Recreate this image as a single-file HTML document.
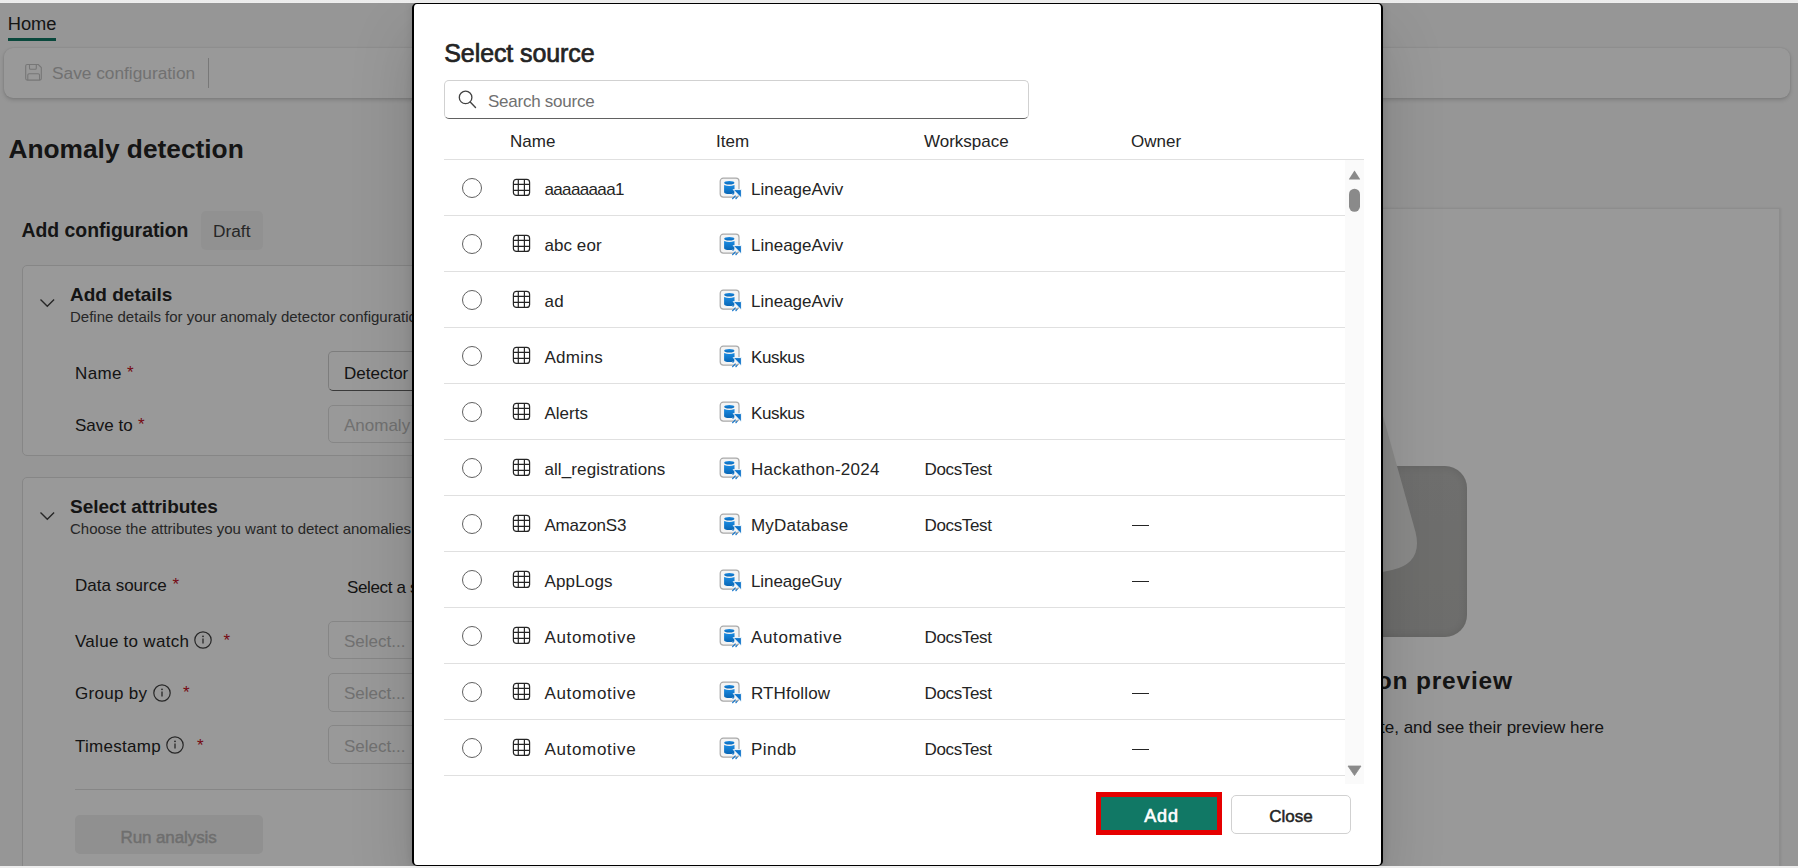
<!DOCTYPE html>
<html><head><meta charset="utf-8"><style>
html,body{margin:0;padding:0}
body{width:1798px;height:868px;overflow:hidden;position:relative;background:#ededed;font-family:"Liberation Sans", sans-serif}
.t{position:absolute;white-space:nowrap}
#page{position:absolute;left:0;top:3px;width:1798px;height:863px;background:#fafafa;overflow:hidden}
#page > *{margin-top:-3px}
#ov{position:absolute;left:0;top:3px;width:1798px;height:863px;background:rgba(0,0,0,.4)}
#dlg{position:absolute;left:412px;top:3px;width:971px;height:863px;background:#fff;border-style:solid;border-color:#000;border-width:1px 2px 1px 2px;box-sizing:border-box;border-radius:5px;box-shadow:0 0 8px rgba(0,0,0,.12),0 32px 64px rgba(0,0,0,.16)}
</style></head><body>
<div id="page">
<div class="t" style="left:7.7px;top:15.01px;font-size:18.3px;line-height:18.3px;font-weight:normal;color:#242424;">Home</div>
<div style="position:absolute;left:8px;top:38px;width:48px;height:3px;background:#117865"></div>
<div style="position:absolute;left:4px;top:47.5px;width:1786px;height:50px;background:#fff;border-radius:9px;box-shadow:0 2px 4px rgba(0,0,0,.16),0 0 2px rgba(0,0,0,.12)"></div>
<svg style="position:absolute;left:24px;top:63px" width="20" height="20" viewBox="0 0 20 20"><path d="M3.2 1.5 H14.3 L17.3 4.5 V15.6 Q17.3 17.1 15.8 17.1 H3.2 Q1.7 17.1 1.7 15.6 V3 Q1.7 1.5 3.2 1.5 Z M5.5 1.5 V5.3 Q5.5 6.3 6.5 6.3 H11.3 Q12.3 6.3 12.3 5.3 V1.5 M3.8 17.1 V12 Q3.8 10.7 5.1 10.7 H14.2 Q15.5 10.7 15.5 12 V17.1" fill="none" stroke="#c6c6c6" stroke-width="1.1"/></svg>
<div class="t" style="left:52px;top:65.36px;font-size:17.3px;line-height:17.3px;font-weight:normal;color:#bdbdbd;">Save configuration</div>
<div style="position:absolute;left:208px;top:58px;width:1px;height:30px;background:#c8c8c8"></div>
<div class="t" style="left:8.5px;top:135.94px;font-size:26.3px;line-height:26.3px;font-weight:bold;color:#242424;">Anomaly detection</div>
<div class="t" style="left:21.5px;top:221.18px;font-size:19.4px;line-height:19.4px;font-weight:bold;color:#242424;">Add configuration</div>
<div style="position:absolute;left:200.5px;top:211px;width:62.5px;height:39px;background:#f2f2f2;border-radius:5px"></div>
<div class="t" style="left:213px;top:223.16px;font-size:17.3px;line-height:17.3px;font-weight:normal;color:#424242;">Draft</div>
<div style="position:absolute;left:22px;top:265px;width:800px;height:191px;background:#fff;border:1px solid #e0e0e0;border-radius:5px;box-sizing:border-box"></div>
<svg style="position:absolute;left:39px;top:297px" width="18" height="12" viewBox="0 0 18 12"><path d="M1.5 2.5l6.8 6.8 6.8-6.8" fill="none" stroke="#424242" stroke-width="1.4"/></svg>
<div class="t" style="left:70px;top:284.52px;font-size:19px;line-height:19px;font-weight:bold;color:#242424;">Add details</div>
<div class="t" style="left:70px;top:309.30px;font-size:15px;line-height:15px;font-weight:normal;color:#424242;">Define details for your anomaly detector configuration</div>
<div class="t" style="left:75px;top:364.61px;font-size:17px;line-height:17px;font-weight:normal;color:#242424;letter-spacing:0.4px;">Name</div>
<div class="t" style="left:127px;top:363.61px;font-size:17px;line-height:17px;font-weight:normal;color:#c50f1f;">*</div>
<div class="t" style="left:75px;top:416.61px;font-size:17px;line-height:17px;font-weight:normal;color:#242424;">Save to</div>
<div class="t" style="left:138px;top:415.61px;font-size:17px;line-height:17px;font-weight:normal;color:#c50f1f;">*</div>
<div style="position:absolute;left:328px;top:351px;width:300px;height:39.5px;background:#fff;border:1px solid #d1d1d1;border-bottom-color:#616161;border-radius:5px;box-sizing:border-box"></div>
<div class="t" style="left:344px;top:364.61px;font-size:17px;line-height:17px;font-weight:normal;color:#242424;">Detector</div>
<div style="position:absolute;left:328px;top:405px;width:300px;height:37.5px;background:#fff;border:1px solid #e0e0e0;border-radius:5px;box-sizing:border-box"></div>
<div class="t" style="left:344px;top:416.61px;font-size:17px;line-height:17px;font-weight:normal;color:#bdbdbd;">Anomaly</div>
<div style="position:absolute;left:22px;top:477px;width:800px;height:420px;background:#fff;border:1px solid #e0e0e0;border-radius:5px;box-sizing:border-box"></div>
<svg style="position:absolute;left:39px;top:509.5px" width="18" height="12" viewBox="0 0 18 12"><path d="M1.5 2.5l6.8 6.8 6.8-6.8" fill="none" stroke="#424242" stroke-width="1.4"/></svg>
<div class="t" style="left:70px;top:496.52px;font-size:19px;line-height:19px;font-weight:bold;color:#242424;">Select attributes</div>
<div class="t" style="left:70px;top:521.30px;font-size:15px;line-height:15px;font-weight:normal;color:#424242;">Choose the attributes you want to detect anomalies for</div>
<div class="t" style="left:75px;top:576.61px;font-size:17px;line-height:17px;font-weight:normal;color:#242424;">Data source</div>
<div class="t" style="left:172.5px;top:575.61px;font-size:17px;line-height:17px;font-weight:normal;color:#c50f1f;">*</div>
<div class="t" style="left:347px;top:578.61px;font-size:17px;line-height:17px;font-weight:normal;color:#242424;letter-spacing:-0.35px;">Select a source</div>
<div class="t" style="left:75px;top:632.61px;font-size:17px;line-height:17px;font-weight:normal;color:#242424;letter-spacing:0.28px;">Value to watch</div>
<svg style="position:absolute;left:193px;top:630px" width="20" height="20" viewBox="0 0 20 20"><circle cx="10" cy="10" r="8.2" fill="none" stroke="#424242" stroke-width="1.2"/><path d="M10 8.6v5" stroke="#424242" stroke-width="1.3"/><circle cx="10" cy="6.3" r="0.9" fill="#424242"/></svg>
<div class="t" style="left:223.5px;top:631.61px;font-size:17px;line-height:17px;font-weight:normal;color:#c50f1f;">*</div>
<div style="position:absolute;left:328px;top:621px;width:300px;height:37.5px;background:#fff;border:1px solid #e0e0e0;border-radius:5px;box-sizing:border-box"></div>
<div class="t" style="left:344px;top:632.61px;font-size:17px;line-height:17px;font-weight:normal;color:#bdbdbd;">Select...</div>
<div class="t" style="left:75px;top:685.11px;font-size:17px;line-height:17px;font-weight:normal;color:#242424;letter-spacing:0.28px;">Group by</div>
<svg style="position:absolute;left:152px;top:682.5px" width="20" height="20" viewBox="0 0 20 20"><circle cx="10" cy="10" r="8.2" fill="none" stroke="#424242" stroke-width="1.2"/><path d="M10 8.6v5" stroke="#424242" stroke-width="1.3"/><circle cx="10" cy="6.3" r="0.9" fill="#424242"/></svg>
<div class="t" style="left:183px;top:684.11px;font-size:17px;line-height:17px;font-weight:normal;color:#c50f1f;">*</div>
<div style="position:absolute;left:328px;top:672.5px;width:300px;height:39.0px;background:#fff;border:1px solid #e0e0e0;border-radius:5px;box-sizing:border-box"></div>
<div class="t" style="left:344px;top:685.11px;font-size:17px;line-height:17px;font-weight:normal;color:#bdbdbd;">Select...</div>
<div class="t" style="left:75px;top:737.61px;font-size:17px;line-height:17px;font-weight:normal;color:#242424;letter-spacing:0.28px;">Timestamp</div>
<svg style="position:absolute;left:165px;top:735px" width="20" height="20" viewBox="0 0 20 20"><circle cx="10" cy="10" r="8.2" fill="none" stroke="#424242" stroke-width="1.2"/><path d="M10 8.6v5" stroke="#424242" stroke-width="1.3"/><circle cx="10" cy="6.3" r="0.9" fill="#424242"/></svg>
<div class="t" style="left:197px;top:736.61px;font-size:17px;line-height:17px;font-weight:normal;color:#c50f1f;">*</div>
<div style="position:absolute;left:328px;top:725px;width:300px;height:38.5px;background:#fff;border:1px solid #e0e0e0;border-radius:5px;box-sizing:border-box"></div>
<div class="t" style="left:344px;top:737.61px;font-size:17px;line-height:17px;font-weight:normal;color:#bdbdbd;">Select...</div>
<div style="position:absolute;left:75px;top:789px;width:700px;height:1px;background:#e0e0e0"></div>
<div style="position:absolute;left:75px;top:815px;width:187.5px;height:38.5px;background:#f0f0f0;border-radius:5px"></div>
<div class="t" style="left:120.5px;top:828.61px;font-size:17px;line-height:17px;font-weight:normal;color:#b8b8b8;letter-spacing:-0.1px;-webkit-text-stroke:0.45px #b8b8b8;">Run analysis</div>
<div style="position:absolute;left:1300px;top:208px;width:479.5px;height:700px;background:#fff;border:1px solid #ebebeb;box-sizing:border-box;box-shadow:1px 0 2px rgba(0,0,0,.08)"></div>
<div style="position:absolute;left:1300px;top:466px;width:166.5px;height:170.5px;border-radius:22px;background:linear-gradient(#b9b9b7,#b6b6b4);box-shadow:inset 0 0 8px rgba(0,0,0,.12)"></div>
<svg style="position:absolute;left:1300px;top:300px" width="130" height="300" viewBox="0 0 130 300"><path d="M50.5 0 L115.5 232 Q123 263 92 270 L0 289 Z" fill="#e7e7e5"/></svg>
<div class="t" style="left:1100.8px;top:668.86px;font-size:24.5px;line-height:24.5px;font-weight:bold;color:#242424;letter-spacing:0.8px;width:412px;text-align:right;">Configuration preview</div>
<div class="t" style="left:1000px;top:718.81px;font-size:17px;line-height:17px;font-weight:normal;color:#242424;width:604px;text-align:right;">Select attributes to evaluate, and see their preview here</div>
</div>
<div id="ov"></div>
<div id="dlg">
</div>
<div class="t" style="left:444.3px;top:40.84px;font-size:25px;line-height:25px;font-weight:normal;color:#242424;letter-spacing:-0.1px;-webkit-text-stroke:0.7px #242424;">Select source</div>
<div style="position:absolute;left:444px;top:79.5px;width:585px;height:39.5px;border:1px solid #d1d1d1;border-bottom-color:#616161;border-radius:5px;box-sizing:border-box;background:#fff"></div>
<svg style="position:absolute;left:456px;top:88px" width="24" height="24" viewBox="0 0 24 24"><circle cx="9.6" cy="9.4" r="6.3" fill="none" stroke="#424242" stroke-width="1.3"/><path d="M14.2 14.1l5.3 5.3" stroke="#424242" stroke-width="1.4" stroke-linecap="round"/></svg>
<div class="t" style="left:488px;top:92.61px;font-size:17px;line-height:17px;font-weight:normal;color:#707070;letter-spacing:-0.25px;">Search source</div>
<div class="t" style="left:510px;top:133.01px;font-size:17px;line-height:17px;font-weight:normal;color:#242424;">Name</div>
<div class="t" style="left:716px;top:133.01px;font-size:17px;line-height:17px;font-weight:normal;color:#242424;">Item</div>
<div class="t" style="left:924px;top:133.01px;font-size:17px;line-height:17px;font-weight:normal;color:#242424;">Workspace</div>
<div class="t" style="left:1131px;top:133.01px;font-size:17px;line-height:17px;font-weight:normal;color:#242424;">Owner</div>
<div style="position:absolute;left:444px;top:159px;width:920px;height:1px;background:#e0e0e0"></div>
<div style="position:absolute;left:444px;top:215px;width:901px;height:1px;background:#e0e0e0"></div>
<div style="position:absolute;left:462px;top:178px;width:20px;height:20px;border:1px solid #616161;border-radius:50%;box-sizing:border-box"></div>
<svg style="position:absolute;left:512px;top:178px" width="20" height="20" viewBox="0 0 20 20"><rect x="1.4" y="1.4" width="16.2" height="16" rx="3" fill="none" stroke="#242424" stroke-width="1.2"/><path d="M6.3 1.4v16M12.4 1.4v16M1.4 6.3h16.2M1.4 12.4h16.2" stroke="#242424" stroke-width="1.2"/></svg>
<div class="t" style="left:544.4px;top:181.11px;font-size:17px;line-height:17px;font-weight:normal;color:#242424;letter-spacing:-0.625px;">aaaaaaaa1</div>
<svg style="position:absolute;left:718px;top:177px" width="26" height="24" viewBox="0 0 26 24"><defs><linearGradient id="g0" x1="0" y1="0" x2="0" y2="1"><stop offset="0" stop-color="#1a8be2"/><stop offset="1" stop-color="#0866b5"/></linearGradient></defs><rect x="2.2" y="1.2" width="18.8" height="18.9" rx="3" fill="#f4f4f4" stroke="#a9a9a9" stroke-width="1.2"/><ellipse cx="11.3" cy="5.8" rx="5.1" ry="1.8" fill="url(#g0)"/><path d="M6.1 8.1 Q11.3 9.9 16.5 8.1 V15 Q16.5 17 11.3 17 Q6.1 17 6.1 15 Z" fill="url(#g0)"/><path d="M15.2 12.6 H23.4 V21 Z" fill="#0f74ca" stroke="#fff" stroke-width="0.9" stroke-linejoin="round"/><path d="M14.6 17.6 l1.5-1.5 M14.3 22 l3.3-3.3 M17.6 22 l1.8-1.8" stroke="#1577cc" stroke-width="1.1"/></svg>
<div class="t" style="left:751px;top:181.11px;font-size:17px;line-height:17px;font-weight:normal;color:#242424;">LineageAviv</div>
<div style="position:absolute;left:444px;top:271px;width:901px;height:1px;background:#e0e0e0"></div>
<div style="position:absolute;left:462px;top:234px;width:20px;height:20px;border:1px solid #616161;border-radius:50%;box-sizing:border-box"></div>
<svg style="position:absolute;left:512px;top:234px" width="20" height="20" viewBox="0 0 20 20"><rect x="1.4" y="1.4" width="16.2" height="16" rx="3" fill="none" stroke="#242424" stroke-width="1.2"/><path d="M6.3 1.4v16M12.4 1.4v16M1.4 6.3h16.2M1.4 12.4h16.2" stroke="#242424" stroke-width="1.2"/></svg>
<div class="t" style="left:544.4px;top:237.11px;font-size:17px;line-height:17px;font-weight:normal;color:#242424;letter-spacing:0.083px;">abc eor</div>
<svg style="position:absolute;left:718px;top:233px" width="26" height="24" viewBox="0 0 26 24"><defs><linearGradient id="g1" x1="0" y1="0" x2="0" y2="1"><stop offset="0" stop-color="#1a8be2"/><stop offset="1" stop-color="#0866b5"/></linearGradient></defs><rect x="2.2" y="1.2" width="18.8" height="18.9" rx="3" fill="#f4f4f4" stroke="#a9a9a9" stroke-width="1.2"/><ellipse cx="11.3" cy="5.8" rx="5.1" ry="1.8" fill="url(#g1)"/><path d="M6.1 8.1 Q11.3 9.9 16.5 8.1 V15 Q16.5 17 11.3 17 Q6.1 17 6.1 15 Z" fill="url(#g1)"/><path d="M15.2 12.6 H23.4 V21 Z" fill="#0f74ca" stroke="#fff" stroke-width="0.9" stroke-linejoin="round"/><path d="M14.6 17.6 l1.5-1.5 M14.3 22 l3.3-3.3 M17.6 22 l1.8-1.8" stroke="#1577cc" stroke-width="1.1"/></svg>
<div class="t" style="left:751px;top:237.11px;font-size:17px;line-height:17px;font-weight:normal;color:#242424;">LineageAviv</div>
<div style="position:absolute;left:444px;top:327px;width:901px;height:1px;background:#e0e0e0"></div>
<div style="position:absolute;left:462px;top:290px;width:20px;height:20px;border:1px solid #616161;border-radius:50%;box-sizing:border-box"></div>
<svg style="position:absolute;left:512px;top:290px" width="20" height="20" viewBox="0 0 20 20"><rect x="1.4" y="1.4" width="16.2" height="16" rx="3" fill="none" stroke="#242424" stroke-width="1.2"/><path d="M6.3 1.4v16M12.4 1.4v16M1.4 6.3h16.2M1.4 12.4h16.2" stroke="#242424" stroke-width="1.2"/></svg>
<div class="t" style="left:544.4px;top:293.11px;font-size:17px;line-height:17px;font-weight:normal;color:#242424;letter-spacing:0.4px;">ad</div>
<svg style="position:absolute;left:718px;top:289px" width="26" height="24" viewBox="0 0 26 24"><defs><linearGradient id="g2" x1="0" y1="0" x2="0" y2="1"><stop offset="0" stop-color="#1a8be2"/><stop offset="1" stop-color="#0866b5"/></linearGradient></defs><rect x="2.2" y="1.2" width="18.8" height="18.9" rx="3" fill="#f4f4f4" stroke="#a9a9a9" stroke-width="1.2"/><ellipse cx="11.3" cy="5.8" rx="5.1" ry="1.8" fill="url(#g2)"/><path d="M6.1 8.1 Q11.3 9.9 16.5 8.1 V15 Q16.5 17 11.3 17 Q6.1 17 6.1 15 Z" fill="url(#g2)"/><path d="M15.2 12.6 H23.4 V21 Z" fill="#0f74ca" stroke="#fff" stroke-width="0.9" stroke-linejoin="round"/><path d="M14.6 17.6 l1.5-1.5 M14.3 22 l3.3-3.3 M17.6 22 l1.8-1.8" stroke="#1577cc" stroke-width="1.1"/></svg>
<div class="t" style="left:751px;top:293.11px;font-size:17px;line-height:17px;font-weight:normal;color:#242424;">LineageAviv</div>
<div style="position:absolute;left:444px;top:383px;width:901px;height:1px;background:#e0e0e0"></div>
<div style="position:absolute;left:462px;top:346px;width:20px;height:20px;border:1px solid #616161;border-radius:50%;box-sizing:border-box"></div>
<svg style="position:absolute;left:512px;top:346px" width="20" height="20" viewBox="0 0 20 20"><rect x="1.4" y="1.4" width="16.2" height="16" rx="3" fill="none" stroke="#242424" stroke-width="1.2"/><path d="M6.3 1.4v16M12.4 1.4v16M1.4 6.3h16.2M1.4 12.4h16.2" stroke="#242424" stroke-width="1.2"/></svg>
<div class="t" style="left:544.4px;top:349.11px;font-size:17px;line-height:17px;font-weight:normal;color:#242424;letter-spacing:0.32px;">Admins</div>
<svg style="position:absolute;left:718px;top:345px" width="26" height="24" viewBox="0 0 26 24"><defs><linearGradient id="g3" x1="0" y1="0" x2="0" y2="1"><stop offset="0" stop-color="#1a8be2"/><stop offset="1" stop-color="#0866b5"/></linearGradient></defs><rect x="2.2" y="1.2" width="18.8" height="18.9" rx="3" fill="#f4f4f4" stroke="#a9a9a9" stroke-width="1.2"/><ellipse cx="11.3" cy="5.8" rx="5.1" ry="1.8" fill="url(#g3)"/><path d="M6.1 8.1 Q11.3 9.9 16.5 8.1 V15 Q16.5 17 11.3 17 Q6.1 17 6.1 15 Z" fill="url(#g3)"/><path d="M15.2 12.6 H23.4 V21 Z" fill="#0f74ca" stroke="#fff" stroke-width="0.9" stroke-linejoin="round"/><path d="M14.6 17.6 l1.5-1.5 M14.3 22 l3.3-3.3 M17.6 22 l1.8-1.8" stroke="#1577cc" stroke-width="1.1"/></svg>
<div class="t" style="left:751px;top:349.11px;font-size:17px;line-height:17px;font-weight:normal;color:#242424;letter-spacing:-0.38px;">Kuskus</div>
<div style="position:absolute;left:444px;top:439px;width:901px;height:1px;background:#e0e0e0"></div>
<div style="position:absolute;left:462px;top:402px;width:20px;height:20px;border:1px solid #616161;border-radius:50%;box-sizing:border-box"></div>
<svg style="position:absolute;left:512px;top:402px" width="20" height="20" viewBox="0 0 20 20"><rect x="1.4" y="1.4" width="16.2" height="16" rx="3" fill="none" stroke="#242424" stroke-width="1.2"/><path d="M6.3 1.4v16M12.4 1.4v16M1.4 6.3h16.2M1.4 12.4h16.2" stroke="#242424" stroke-width="1.2"/></svg>
<div class="t" style="left:544.4px;top:405.11px;font-size:17px;line-height:17px;font-weight:normal;color:#242424;letter-spacing:0.02px;">Alerts</div>
<svg style="position:absolute;left:718px;top:401px" width="26" height="24" viewBox="0 0 26 24"><defs><linearGradient id="g4" x1="0" y1="0" x2="0" y2="1"><stop offset="0" stop-color="#1a8be2"/><stop offset="1" stop-color="#0866b5"/></linearGradient></defs><rect x="2.2" y="1.2" width="18.8" height="18.9" rx="3" fill="#f4f4f4" stroke="#a9a9a9" stroke-width="1.2"/><ellipse cx="11.3" cy="5.8" rx="5.1" ry="1.8" fill="url(#g4)"/><path d="M6.1 8.1 Q11.3 9.9 16.5 8.1 V15 Q16.5 17 11.3 17 Q6.1 17 6.1 15 Z" fill="url(#g4)"/><path d="M15.2 12.6 H23.4 V21 Z" fill="#0f74ca" stroke="#fff" stroke-width="0.9" stroke-linejoin="round"/><path d="M14.6 17.6 l1.5-1.5 M14.3 22 l3.3-3.3 M17.6 22 l1.8-1.8" stroke="#1577cc" stroke-width="1.1"/></svg>
<div class="t" style="left:751px;top:405.11px;font-size:17px;line-height:17px;font-weight:normal;color:#242424;letter-spacing:-0.38px;">Kuskus</div>
<div style="position:absolute;left:444px;top:495px;width:901px;height:1px;background:#e0e0e0"></div>
<div style="position:absolute;left:462px;top:458px;width:20px;height:20px;border:1px solid #616161;border-radius:50%;box-sizing:border-box"></div>
<svg style="position:absolute;left:512px;top:458px" width="20" height="20" viewBox="0 0 20 20"><rect x="1.4" y="1.4" width="16.2" height="16" rx="3" fill="none" stroke="#242424" stroke-width="1.2"/><path d="M6.3 1.4v16M12.4 1.4v16M1.4 6.3h16.2M1.4 12.4h16.2" stroke="#242424" stroke-width="1.2"/></svg>
<div class="t" style="left:544.4px;top:461.11px;font-size:17px;line-height:17px;font-weight:normal;color:#242424;letter-spacing:0.119px;">all_registrations</div>
<svg style="position:absolute;left:718px;top:457px" width="26" height="24" viewBox="0 0 26 24"><defs><linearGradient id="g5" x1="0" y1="0" x2="0" y2="1"><stop offset="0" stop-color="#1a8be2"/><stop offset="1" stop-color="#0866b5"/></linearGradient></defs><rect x="2.2" y="1.2" width="18.8" height="18.9" rx="3" fill="#f4f4f4" stroke="#a9a9a9" stroke-width="1.2"/><ellipse cx="11.3" cy="5.8" rx="5.1" ry="1.8" fill="url(#g5)"/><path d="M6.1 8.1 Q11.3 9.9 16.5 8.1 V15 Q16.5 17 11.3 17 Q6.1 17 6.1 15 Z" fill="url(#g5)"/><path d="M15.2 12.6 H23.4 V21 Z" fill="#0f74ca" stroke="#fff" stroke-width="0.9" stroke-linejoin="round"/><path d="M14.6 17.6 l1.5-1.5 M14.3 22 l3.3-3.3 M17.6 22 l1.8-1.8" stroke="#1577cc" stroke-width="1.1"/></svg>
<div class="t" style="left:751px;top:461.11px;font-size:17px;line-height:17px;font-weight:normal;color:#242424;letter-spacing:0.292px;">Hackathon-2024</div>
<div class="t" style="left:924.5px;top:461.11px;font-size:17px;line-height:17px;font-weight:normal;color:#242424;letter-spacing:-0.35px;">DocsTest</div>
<div style="position:absolute;left:444px;top:551px;width:901px;height:1px;background:#e0e0e0"></div>
<div style="position:absolute;left:462px;top:514px;width:20px;height:20px;border:1px solid #616161;border-radius:50%;box-sizing:border-box"></div>
<svg style="position:absolute;left:512px;top:514px" width="20" height="20" viewBox="0 0 20 20"><rect x="1.4" y="1.4" width="16.2" height="16" rx="3" fill="none" stroke="#242424" stroke-width="1.2"/><path d="M6.3 1.4v16M12.4 1.4v16M1.4 6.3h16.2M1.4 12.4h16.2" stroke="#242424" stroke-width="1.2"/></svg>
<div class="t" style="left:544.4px;top:517.11px;font-size:17px;line-height:17px;font-weight:normal;color:#242424;letter-spacing:-0.171px;">AmazonS3</div>
<svg style="position:absolute;left:718px;top:513px" width="26" height="24" viewBox="0 0 26 24"><defs><linearGradient id="g6" x1="0" y1="0" x2="0" y2="1"><stop offset="0" stop-color="#1a8be2"/><stop offset="1" stop-color="#0866b5"/></linearGradient></defs><rect x="2.2" y="1.2" width="18.8" height="18.9" rx="3" fill="#f4f4f4" stroke="#a9a9a9" stroke-width="1.2"/><ellipse cx="11.3" cy="5.8" rx="5.1" ry="1.8" fill="url(#g6)"/><path d="M6.1 8.1 Q11.3 9.9 16.5 8.1 V15 Q16.5 17 11.3 17 Q6.1 17 6.1 15 Z" fill="url(#g6)"/><path d="M15.2 12.6 H23.4 V21 Z" fill="#0f74ca" stroke="#fff" stroke-width="0.9" stroke-linejoin="round"/><path d="M14.6 17.6 l1.5-1.5 M14.3 22 l3.3-3.3 M17.6 22 l1.8-1.8" stroke="#1577cc" stroke-width="1.1"/></svg>
<div class="t" style="left:751px;top:517.11px;font-size:17px;line-height:17px;font-weight:normal;color:#242424;letter-spacing:0.189px;">MyDatabase</div>
<div class="t" style="left:924.5px;top:517.11px;font-size:17px;line-height:17px;font-weight:normal;color:#242424;letter-spacing:-0.35px;">DocsTest</div>
<div style="position:absolute;left:1131.7px;top:525px;width:17px;height:1.2px;background:#242424"></div>
<div style="position:absolute;left:444px;top:607px;width:901px;height:1px;background:#e0e0e0"></div>
<div style="position:absolute;left:462px;top:570px;width:20px;height:20px;border:1px solid #616161;border-radius:50%;box-sizing:border-box"></div>
<svg style="position:absolute;left:512px;top:570px" width="20" height="20" viewBox="0 0 20 20"><rect x="1.4" y="1.4" width="16.2" height="16" rx="3" fill="none" stroke="#242424" stroke-width="1.2"/><path d="M6.3 1.4v16M12.4 1.4v16M1.4 6.3h16.2M1.4 12.4h16.2" stroke="#242424" stroke-width="1.2"/></svg>
<div class="t" style="left:544.4px;top:573.11px;font-size:17px;line-height:17px;font-weight:normal;color:#242424;letter-spacing:0.167px;">AppLogs</div>
<svg style="position:absolute;left:718px;top:569px" width="26" height="24" viewBox="0 0 26 24"><defs><linearGradient id="g7" x1="0" y1="0" x2="0" y2="1"><stop offset="0" stop-color="#1a8be2"/><stop offset="1" stop-color="#0866b5"/></linearGradient></defs><rect x="2.2" y="1.2" width="18.8" height="18.9" rx="3" fill="#f4f4f4" stroke="#a9a9a9" stroke-width="1.2"/><ellipse cx="11.3" cy="5.8" rx="5.1" ry="1.8" fill="url(#g7)"/><path d="M6.1 8.1 Q11.3 9.9 16.5 8.1 V15 Q16.5 17 11.3 17 Q6.1 17 6.1 15 Z" fill="url(#g7)"/><path d="M15.2 12.6 H23.4 V21 Z" fill="#0f74ca" stroke="#fff" stroke-width="0.9" stroke-linejoin="round"/><path d="M14.6 17.6 l1.5-1.5 M14.3 22 l3.3-3.3 M17.6 22 l1.8-1.8" stroke="#1577cc" stroke-width="1.1"/></svg>
<div class="t" style="left:751px;top:573.11px;font-size:17px;line-height:17px;font-weight:normal;color:#242424;letter-spacing:-0.099px;">LineageGuy</div>
<div style="position:absolute;left:1131.7px;top:581px;width:17px;height:1.2px;background:#242424"></div>
<div style="position:absolute;left:444px;top:663px;width:901px;height:1px;background:#e0e0e0"></div>
<div style="position:absolute;left:462px;top:626px;width:20px;height:20px;border:1px solid #616161;border-radius:50%;box-sizing:border-box"></div>
<svg style="position:absolute;left:512px;top:626px" width="20" height="20" viewBox="0 0 20 20"><rect x="1.4" y="1.4" width="16.2" height="16" rx="3" fill="none" stroke="#242424" stroke-width="1.2"/><path d="M6.3 1.4v16M12.4 1.4v16M1.4 6.3h16.2M1.4 12.4h16.2" stroke="#242424" stroke-width="1.2"/></svg>
<div class="t" style="left:544.4px;top:629.11px;font-size:17px;line-height:17px;font-weight:normal;color:#242424;letter-spacing:0.688px;">Automotive</div>
<svg style="position:absolute;left:718px;top:625px" width="26" height="24" viewBox="0 0 26 24"><defs><linearGradient id="g8" x1="0" y1="0" x2="0" y2="1"><stop offset="0" stop-color="#1a8be2"/><stop offset="1" stop-color="#0866b5"/></linearGradient></defs><rect x="2.2" y="1.2" width="18.8" height="18.9" rx="3" fill="#f4f4f4" stroke="#a9a9a9" stroke-width="1.2"/><ellipse cx="11.3" cy="5.8" rx="5.1" ry="1.8" fill="url(#g8)"/><path d="M6.1 8.1 Q11.3 9.9 16.5 8.1 V15 Q16.5 17 11.3 17 Q6.1 17 6.1 15 Z" fill="url(#g8)"/><path d="M15.2 12.6 H23.4 V21 Z" fill="#0f74ca" stroke="#fff" stroke-width="0.9" stroke-linejoin="round"/><path d="M14.6 17.6 l1.5-1.5 M14.3 22 l3.3-3.3 M17.6 22 l1.8-1.8" stroke="#1577cc" stroke-width="1.1"/></svg>
<div class="t" style="left:751px;top:629.11px;font-size:17px;line-height:17px;font-weight:normal;color:#242424;letter-spacing:0.645px;">Automative</div>
<div class="t" style="left:924.5px;top:629.11px;font-size:17px;line-height:17px;font-weight:normal;color:#242424;letter-spacing:-0.35px;">DocsTest</div>
<div style="position:absolute;left:444px;top:719px;width:901px;height:1px;background:#e0e0e0"></div>
<div style="position:absolute;left:462px;top:682px;width:20px;height:20px;border:1px solid #616161;border-radius:50%;box-sizing:border-box"></div>
<svg style="position:absolute;left:512px;top:682px" width="20" height="20" viewBox="0 0 20 20"><rect x="1.4" y="1.4" width="16.2" height="16" rx="3" fill="none" stroke="#242424" stroke-width="1.2"/><path d="M6.3 1.4v16M12.4 1.4v16M1.4 6.3h16.2M1.4 12.4h16.2" stroke="#242424" stroke-width="1.2"/></svg>
<div class="t" style="left:544.4px;top:685.11px;font-size:17px;line-height:17px;font-weight:normal;color:#242424;letter-spacing:0.688px;">Automotive</div>
<svg style="position:absolute;left:718px;top:681px" width="26" height="24" viewBox="0 0 26 24"><defs><linearGradient id="g9" x1="0" y1="0" x2="0" y2="1"><stop offset="0" stop-color="#1a8be2"/><stop offset="1" stop-color="#0866b5"/></linearGradient></defs><rect x="2.2" y="1.2" width="18.8" height="18.9" rx="3" fill="#f4f4f4" stroke="#a9a9a9" stroke-width="1.2"/><ellipse cx="11.3" cy="5.8" rx="5.1" ry="1.8" fill="url(#g9)"/><path d="M6.1 8.1 Q11.3 9.9 16.5 8.1 V15 Q16.5 17 11.3 17 Q6.1 17 6.1 15 Z" fill="url(#g9)"/><path d="M15.2 12.6 H23.4 V21 Z" fill="#0f74ca" stroke="#fff" stroke-width="0.9" stroke-linejoin="round"/><path d="M14.6 17.6 l1.5-1.5 M14.3 22 l3.3-3.3 M17.6 22 l1.8-1.8" stroke="#1577cc" stroke-width="1.1"/></svg>
<div class="t" style="left:751px;top:685.11px;font-size:17px;line-height:17px;font-weight:normal;color:#242424;letter-spacing:0.111px;">RTHfollow</div>
<div class="t" style="left:924.5px;top:685.11px;font-size:17px;line-height:17px;font-weight:normal;color:#242424;letter-spacing:-0.35px;">DocsTest</div>
<div style="position:absolute;left:1131.7px;top:693px;width:17px;height:1.2px;background:#242424"></div>
<div style="position:absolute;left:444px;top:775px;width:901px;height:1px;background:#e0e0e0"></div>
<div style="position:absolute;left:462px;top:738px;width:20px;height:20px;border:1px solid #616161;border-radius:50%;box-sizing:border-box"></div>
<svg style="position:absolute;left:512px;top:738px" width="20" height="20" viewBox="0 0 20 20"><rect x="1.4" y="1.4" width="16.2" height="16" rx="3" fill="none" stroke="#242424" stroke-width="1.2"/><path d="M6.3 1.4v16M12.4 1.4v16M1.4 6.3h16.2M1.4 12.4h16.2" stroke="#242424" stroke-width="1.2"/></svg>
<div class="t" style="left:544.4px;top:741.11px;font-size:17px;line-height:17px;font-weight:normal;color:#242424;letter-spacing:0.688px;">Automotive</div>
<svg style="position:absolute;left:718px;top:737px" width="26" height="24" viewBox="0 0 26 24"><defs><linearGradient id="g10" x1="0" y1="0" x2="0" y2="1"><stop offset="0" stop-color="#1a8be2"/><stop offset="1" stop-color="#0866b5"/></linearGradient></defs><rect x="2.2" y="1.2" width="18.8" height="18.9" rx="3" fill="#f4f4f4" stroke="#a9a9a9" stroke-width="1.2"/><ellipse cx="11.3" cy="5.8" rx="5.1" ry="1.8" fill="url(#g10)"/><path d="M6.1 8.1 Q11.3 9.9 16.5 8.1 V15 Q16.5 17 11.3 17 Q6.1 17 6.1 15 Z" fill="url(#g10)"/><path d="M15.2 12.6 H23.4 V21 Z" fill="#0f74ca" stroke="#fff" stroke-width="0.9" stroke-linejoin="round"/><path d="M14.6 17.6 l1.5-1.5 M14.3 22 l3.3-3.3 M17.6 22 l1.8-1.8" stroke="#1577cc" stroke-width="1.1"/></svg>
<div class="t" style="left:751px;top:741.11px;font-size:17px;line-height:17px;font-weight:normal;color:#242424;letter-spacing:0.45px;">Pindb</div>
<div class="t" style="left:924.5px;top:741.11px;font-size:17px;line-height:17px;font-weight:normal;color:#242424;letter-spacing:-0.35px;">DocsTest</div>
<div style="position:absolute;left:1131.7px;top:749px;width:17px;height:1.2px;background:#242424"></div>
<div style="position:absolute;left:1345px;top:160px;width:19px;height:624px;background:#fafafa"></div>
<svg style="position:absolute;left:1345px;top:160px" width="19" height="624" viewBox="0 0 19 624"><path d="M9.5 10.5 L15 19 Q15.3 19.6 14.6 19.6 H4.4 Q3.7 19.6 4 19 Z" fill="#8a8a8a"/><rect x="4" y="28.7" width="11" height="23.1" rx="5.5" fill="#8a8a8a"/><path d="M9.5 615.5 L16 606 H3 Z" fill="#8a8a8a" stroke="#8a8a8a" stroke-width="0.8" stroke-linejoin="round"/></svg>
<div style="position:absolute;left:1096px;top:792px;width:126px;height:43px;background:#117865;border:5px solid #e60000;box-sizing:border-box"></div>
<div class="t" style="left:1098.5px;top:806.76px;font-size:18px;line-height:18px;font-weight:normal;color:#fff;letter-spacing:0.8px;width:126px;text-align:center;-webkit-text-stroke:0.6px #fff;">Add</div>
<div style="position:absolute;left:1231.3px;top:795.4px;width:119.3px;height:39.1px;background:#fff;border:1px solid #d1d1d1;border-radius:5px;box-sizing:border-box"></div>
<div class="t" style="left:1231.3px;top:807.61px;font-size:17px;line-height:17px;font-weight:normal;color:#242424;width:119.3px;text-align:center;-webkit-text-stroke:0.5px #242424;">Close</div>
<div style="position:absolute;left:0px;top:0px;width:1798px;height:3px;background:linear-gradient(#ececec,#ebebeb 66%,#f0f0f0)"></div>
<div style="position:absolute;left:0px;top:866px;width:1798px;height:2px;background:#eeeeee"></div>
</body></html>
